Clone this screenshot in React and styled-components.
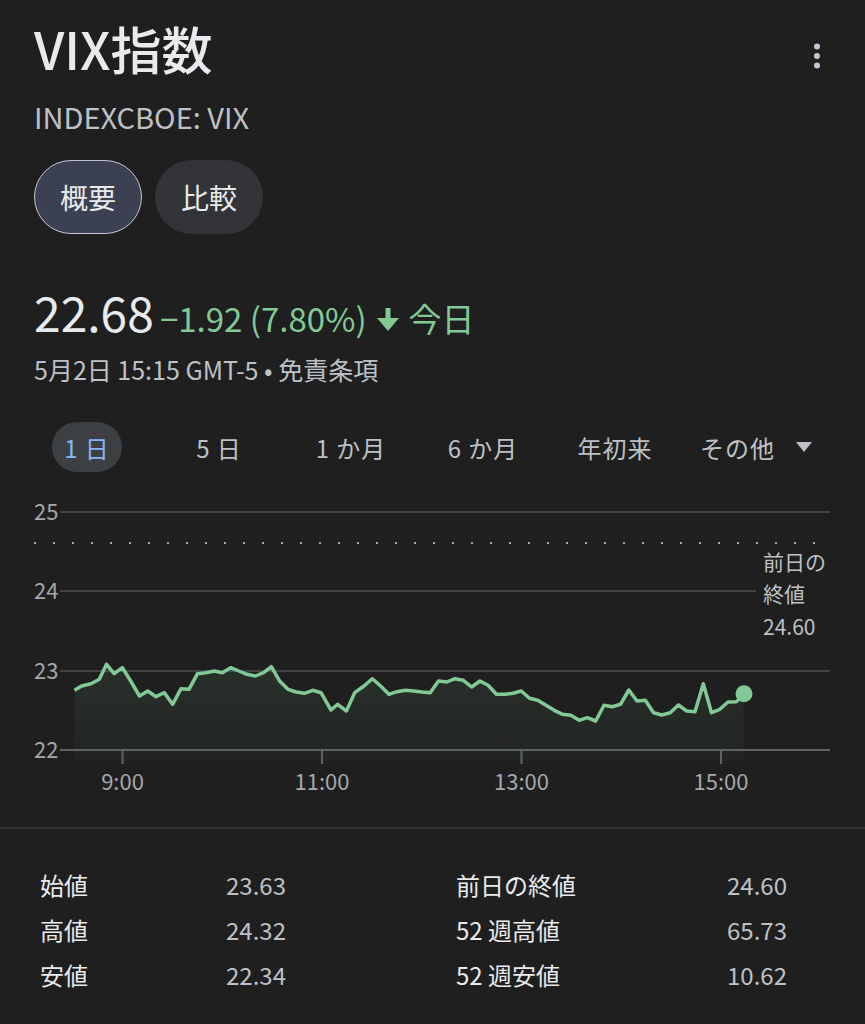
import React from "react";
import styled, { createGlobalStyle } from "styled-components";

const GlobalStyle = createGlobalStyle`
  html, body {
    margin: 0;
    padding: 0;
    background: #1f1f1f;
  }
  body {
    font-family: "Noto Sans CJK JP", "Noto Sans", sans-serif;
    color: #e8eaed;
  }
`;

const Page = styled.div`
  width: 865px;
  min-height: 1024px;
  background: #1f1f1f;
  overflow: hidden;
`;

const Top = styled.div`
  padding: 18px 34px 0 34px;
`;

const TitleRow = styled.div`
  display: flex;
  justify-content: space-between;
  align-items: center;
  height: 60px;
`;

const Title = styled.h1`
  margin: 0;
  font-size: 51px;
  font-weight: 500;
  line-height: 60px;
  color: #e8eaed;
`;

const MenuButton = styled.div`
  display: flex;
  align-items: center;
  justify-content: center;
  width: 24px;
  height: 30px;
  margin-right: 2px;
  margin-top: 16px;
`;

const Ticker = styled.div`
  margin-top: 21px;
  font-size: 29px;
  line-height: 34px;
  color: #bdc1c6;
`;

const ChipRow = styled.div`
  display: flex;
  gap: 13px;
  margin-top: 27px;
`;

const Chip = styled.div`
  display: flex;
  align-items: center;
  justify-content: center;
  box-sizing: border-box;
  height: 74px;
  padding: 0 25px;
  border-radius: 37px;
  font-size: 28px;
  color: #e8eaed;
  background: ${(p) => (p.$active ? "#3b4052" : "#333437")};
  border: 1.5px solid ${(p) => (p.$active ? "#c4c7d0" : "transparent")};
`;

const PriceRow = styled.div`
  display: flex;
  align-items: baseline;
  gap: 6px;
  margin-top: 47px;
  line-height: 60px;
`;

const Price = styled.span`
  font-size: 48px;
  color: #e8eaed;
`;

const Change = styled.span`
  display: flex;
  align-items: baseline;
  gap: 8px;
  font-size: 33px;
  color: #81c995;
`;

const Arrow = styled.svg`
  width: 26px;
  height: 25px;
  align-self: center;
  margin-top: 2px;
`;

const DateLine = styled.div`
  margin-top: 6px;
  font-size: 25px;
  line-height: 30px;
  color: #bdc1c6;
`;

const Tabs = styled.div`
  display: flex;
  align-items: center;
  margin-top: 38px;
  padding-left: 21px;
  height: 50px;
`;

const Tab = styled.div`
  display: flex;
  align-items: center;
  justify-content: center;
  width: ${(p) => (p.$wide ? "150px" : "132px")};
  gap: 21px;
  font-size: 24px;
  letter-spacing: 1px;
  white-space: nowrap;
  color: #bdc1c6;
`;

const TabPill = styled.span`
  display: flex;
  align-items: center;
  justify-content: center;
  min-width: 70px;
  height: 50px;
  border-radius: 25px;
  background: ${(p) => (p.$active ? "#3c4043" : "transparent")};
  color: ${(p) => (p.$active ? "#8ab4f8" : "#bdc1c6")};
`;

const Caret = styled.svg`
  width: 16px;
  height: 10px;
`;

const Chart = styled.svg`
  display: block;
  width: 865px;
  height: 310px;
  margin-top: 19px;
  font-family: "Noto Sans CJK JP", "Noto Sans", sans-serif;
`;

const Divider = styled.div`
  height: 2px;
  margin-top: 26px;
  background: #2f3032;
`;

const Stats = styled.div`
  display: grid;
  grid-template-columns: 186px 230px 271px 1fr;
  padding: 33px 0 0 40px;
  grid-auto-rows: 45px;
  align-items: center;
  font-size: 24px;
`;

const StatLabel = styled.span`
  color: #e8eaed;
`;

const StatValue = styled.span`
  color: #bdc1c6;
`;

const points = [
  [74.5, 689.3], [81.6, 685], [91, 682.7], [99.3, 678.3], [106.5, 663.3],
  [114.2, 672.7], [122.4, 666.7], [130.7, 680], [139.5, 695], [147.8, 690],
  [156, 695.7], [164.4, 691.7], [172.6, 703.3], [181, 687.7], [189, 688.3],
  [197.5, 672.7], [205.7, 671.7], [214, 670], [222.3, 671.7], [230.6, 666.7],
  [238.8, 670], [247, 673.3], [255.4, 675], [263.6, 671.7], [271.4, 665.7],
  [279.6, 680], [288, 688.3], [296.2, 691], [304.5, 692.3], [312.7, 689.3],
  [321, 691.7], [331, 709], [337.6, 703.3], [346.4, 710], [354.7, 691.7],
  [364, 685], [372.3, 677.7], [380.6, 685], [388.9, 693.3], [397, 690.7],
  [405.4, 689.3], [413.7, 690], [422, 691], [430.2, 691.7], [438.5, 680],
  [446.8, 681], [455, 677.7], [463.3, 679.3], [471.6, 686], [479.9, 680],
  [488.1, 684.3], [496.4, 693.3], [504.7, 693.3], [513, 692.3], [521.2, 690],
  [529.5, 697.3], [537.8, 699.3], [546, 704.3], [554.3, 709.3], [562.6, 713.3],
  [570.9, 714.3], [579.1, 719.3], [587.4, 716.7], [595.7, 720], [604, 704.3],
  [612.2, 705.7], [620.5, 703.3], [628.8, 689], [637, 700], [645.3, 699.3],
  [653.6, 711.7], [661.9, 714], [670.2, 711.7], [678.4, 704], [686.7, 710],
  [695, 710.7], [703.3, 682.7], [711.5, 711.7], [719.8, 708.3], [728, 701],
  [736.3, 700.7], [743.5, 694],
];

const linePath = points.map(([x, y], i) => `${i ? "L" : "M"}${x} ${y}`).join(" ");
const areaPath = `${linePath} L743.5 760 L74.5 760 Z`;

const yLabels = [
  { v: "25", y: 511 },
  { v: "24", y: 590 },
  { v: "23", y: 670 },
];

const times = [
  { t: "9:00", x: 122.5 },
  { t: "11:00", x: 322 },
  { t: "13:00", x: 521.5 },
  { t: "15:00", x: 721 },
];

const tabs = ["1 日", "5 日", "1 か月", "6 か月", "年初来"];

const stats = [
  ["始値", "23.63", "前日の終値", "24.60"],
  ["高値", "24.32", "52 週高値", "65.73"],
  ["安値", "22.34", "52 週安値", "10.62"],
];

const PriceChart = () => (
  <Chart viewBox="0 490 865 310">
    <defs>
      <linearGradient id="fill" x1="0" y1="0" x2="0" y2="1">
        <stop offset="0" stopColor="#81c995" stopOpacity="0.1" />
        <stop offset="1" stopColor="#81c995" stopOpacity="0.03" />
      </linearGradient>
    </defs>
    {yLabels.map((l) => (
      <g key={l.v}>
        <line x1="60" x2={l.v === "24" ? 756 : 830} y1={l.y} y2={l.y} stroke="#404245" strokeWidth="2" />
        <text x="34" y={l.y + 8} fontSize="22" fill="#a4a7ab">{l.v}</text>
      </g>
    ))}
    <line x1="34" x2="830" y1="542" y2="542" stroke="#a4a7ab" strokeWidth="2" strokeDasharray="2 17" />
    <path d={areaPath} fill="url(#fill)" />
    <line x1="60" x2="830" y1="749" y2="749" stroke="#5f6266" strokeWidth="2" />
    <text x="34" y="757" fontSize="22" fill="#a4a7ab">22</text>
    {times.map((t) => (
      <g key={t.t}>
        <line x1={t.x} x2={t.x} y1="749" y2="763" stroke="#5f6266" strokeWidth="2" />
        <text x={t.x} y="789" fontSize="22" fill="#a4a7ab" textAnchor="middle">{t.t}</text>
      </g>
    ))}
    <path d={linePath} fill="none" stroke="#81c995" strokeWidth="3.5" strokeLinejoin="round" />
    <circle cx="744" cy="692.7" r="8.5" fill="#81c995" />
    <text fontSize="21" fill="#bdc1c6">
      <tspan x="763" y="569">前日の</tspan>
      <tspan x="763" y="601">終値</tspan>
      <tspan x="763" y="634">24.60</tspan>
    </text>
  </Chart>
);

const App = () => (
  <Page>
    <GlobalStyle />
    <Top>
      <TitleRow>
        <Title>VIX指数</Title>
        <MenuButton>
          <svg width="8" height="26" viewBox="0 0 8 26">
            <circle cx="4" cy="3.5" r="3" fill="#c4c7d5" />
            <circle cx="4" cy="13" r="3" fill="#c4c7d5" />
            <circle cx="4" cy="22.5" r="3" fill="#c4c7d5" />
          </svg>
        </MenuButton>
      </TitleRow>
      <Ticker>INDEXCBOE: VIX</Ticker>
      <ChipRow>
        <Chip $active>概要</Chip>
        <Chip>比較</Chip>
      </ChipRow>
      <PriceRow>
        <Price>22.68</Price>
        <Change>
          <span>−1.92 (7.80%)</span>
          <Arrow viewBox="0 0 26 25">
            <rect x="10.5" y="1" width="5" height="13" fill="#81c995" />
            <polygon points="2,11 24,11 13,24" fill="#81c995" />
          </Arrow>
          <span>今日</span>
        </Change>
      </PriceRow>
      <DateLine>5月2日 15:15 GMT-5 • 免責条項</DateLine>
    </Top>
    <Tabs>
      {tabs.map((t, i) => (
        <Tab key={t}>
          <TabPill $active={i === 0}>{t}</TabPill>
        </Tab>
      ))}
      <Tab $wide>
        <span>その他</span>
        <Caret viewBox="0 0 16 10">
          <polygon points="0,0 16,0 8,10" fill="#bdc1c6" />
        </Caret>
      </Tab>
    </Tabs>
    <PriceChart />
    <Divider />
    <Stats>
      {stats.map((row) => (
        <React.Fragment key={row[0]}>
          <StatLabel>{row[0]}</StatLabel>
          <StatValue>{row[1]}</StatValue>
          <StatLabel>{row[2]}</StatLabel>
          <StatValue>{row[3]}</StatValue>
        </React.Fragment>
      ))}
    </Stats>
  </Page>
);

export default App;
